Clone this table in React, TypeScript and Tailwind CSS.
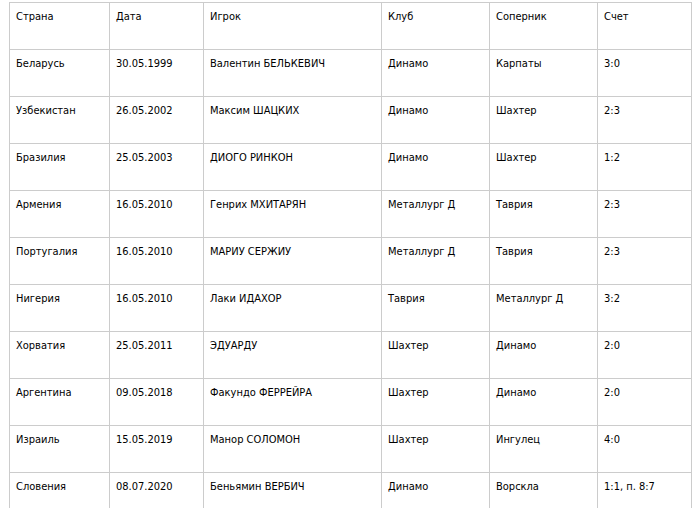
import React from "react";

const rows: string[][] = [
  ["Беларусь", "30.05.1999", "Валентин БЕЛЬКЕВИЧ", "Динамо", "Карпаты", "3:0"],
  ["Узбекистан", "26.05.2002", "Максим ШАЦКИХ", "Динамо", "Шахтер", "2:3"],
  ["Бразилия", "25.05.2003", "ДИОГО РИНКОН", "Динамо", "Шахтер", "1:2"],
  ["Армения", "16.05.2010", "Генрих МХИТАРЯН", "Металлург Д", "Таврия", "2:3"],
  ["Португалия", "16.05.2010", "МАРИУ СЕРЖИУ", "Металлург Д", "Таврия", "2:3"],
  ["Нигерия", "16.05.2010", "Лаки ИДАХОР", "Таврия", "Металлург Д", "3:2"],
  ["Хорватия", "25.05.2011", "ЭДУАРДУ", "Шахтер", "Динамо", "2:0"],
  ["Аргентина", "09.05.2018", "Факундо ФЕРРЕЙРА", "Шахтер", "Динамо", "2:0"],
  ["Израиль", "15.05.2019", "Манор СОЛОМОН", "Шахтер", "Ингулец", "4:0"],
  ["Словения", "08.07.2020", "Беньямин ВЕРБИЧ", "Динамо", "Ворскла", "1:1, п. 8:7"],
];

const header = ["Страна", "Дата", "Игрок", "Клуб", "Соперник", "Счет"];
const widths = ["w-[100px]", "w-[94px]", "w-[178px]", "w-[108px]", "w-[108px]", "w-[94px]"];

export default function App() {
  return (
    <div className="bg-white w-[695px] h-[508px] overflow-hidden pt-[2px] pl-[9px]">
      <table
        className="table-fixed border-collapse w-[682px] text-[11px] text-black font-stretch-condensed"
        style={{ fontFamily: '"DejaVu Sans Condensed", "DejaVu Sans", Verdana, sans-serif' }}
      >
        <colgroup>
          {widths.map((w, i) => (
            <col key={i} className={w} />
          ))}
        </colgroup>
        <tbody>
          {[header, ...rows].map((r, i) => (
            <tr key={i} className="h-[47px]">
              {r.map((c, j) => (
                <td
                  key={j}
                  className="border border-[#cccccc] align-top pl-[6px] pt-[7px] leading-[13px] whitespace-nowrap"
                >
                  {c}
                </td>
              ))}
            </tr>
          ))}
        </tbody>
      </table>
    </div>
  );
}
